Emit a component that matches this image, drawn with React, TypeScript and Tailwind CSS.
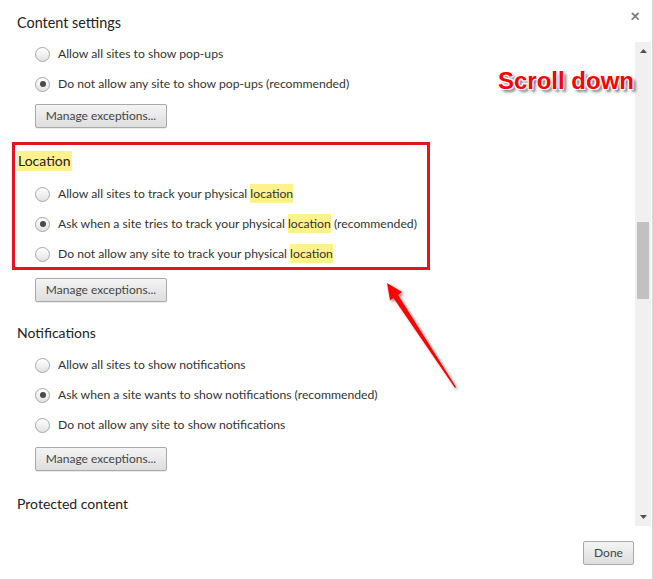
import type { ReactNode } from 'react'

const Radio = ({ checked, children }: { checked?: boolean; children: ReactNode }) => {
  return (
    <div className="flex h-[20px] items-center pl-[18px]">
      <span className="flex h-[15px] w-[15px] items-center justify-center rounded-full border border-[#a6a6a6] bg-linear-to-b from-white to-[#e2e2e2] shadow-[inset_0_1px_0_#fff]">
        {checked && <span className="h-[6px] w-[6px] rounded-full bg-[#4a4a4a]" />}
      </span>
      <span className="ml-[8px] whitespace-nowrap text-[12.2px] text-[#333]">{children}</span>
    </div>
  )
}

const Hl = ({ children }: { children: ReactNode }) => (
  <span className="bg-[#fff28c] py-[2px]">{children}</span>
)

const ManageButton = ({ className = '' }: { className?: string }) => (
  <button
    className={`ml-[18px] flex h-[24px] w-[132px] items-center justify-center rounded-[2px] border border-[#a9a9a9] bg-linear-to-b from-[#f4f4f4] to-[#dedede] text-[12px] text-[#444] shadow-[0_1px_0_rgba(0,0,0,0.08)] ${className}`}
  >
    Manage exceptions...
  </button>
)

const Heading = ({ children, className = '' }: { children: ReactNode; className?: string }) => (
  <div className={`flex h-[20px] items-center text-[14px] text-[#222] ${className}`}>{children}</div>
)

export default function App() {
  return (
    <div
      className="relative h-[579px] w-[653px] overflow-hidden border-r border-[#d6d6d6] bg-white"
      style={{ fontFamily: 'Lato, "Noto Sans", sans-serif' }}
    >
      <header className="flex h-[44px] items-start justify-between pl-[17px] pr-[12px] pt-[12px]">
        <h1 className="text-[14.4px] leading-[22px] text-[#222]">Content settings</h1>
        <span className="-mt-[1px] text-[17px] font-bold leading-[10px] text-[#777]">×</span>
      </header>

      <div className="-mt-[2px] flex h-[484px]">
        <div className="flex-1 overflow-hidden pl-[17px] pt-[2px]">
          <div className="flex flex-col gap-[10px]">
            <Radio>Allow all sites to show pop-ups</Radio>
            <Radio checked>Do not allow any site to show pop-ups (recommended)</Radio>
          </div>
          <ManageButton className="mt-[10px]" />

          <Heading className="mt-[23px]">
            <span className="bg-[#fff28c] px-[1px] leading-[20px]">Location</span>
          </Heading>
          <div className="mt-[13px] flex flex-col gap-[10px]">
            <Radio>
              Allow all sites to track your physical <Hl>location</Hl>
            </Radio>
            <Radio checked>
              Ask when a site tries to track your physical <Hl>location</Hl> (recommended)
            </Radio>
            <Radio>
              Do not allow any site to track your physical <Hl>location</Hl>
            </Radio>
          </div>
          <ManageButton className="mt-[14px]" />

          <Heading className="mt-[20px]">Notifications</Heading>
          <div className="mt-[13px] flex flex-col gap-[10px]">
            <Radio>Allow all sites to show notifications</Radio>
            <Radio checked>Ask when a site wants to show notifications (recommended)</Radio>
            <Radio>Do not allow any site to show notifications</Radio>
          </div>
          <ManageButton className="mt-[12px]" />

          <Heading className="mt-[22px]">Protected content</Heading>
        </div>

        <div className="mr-[1px] flex w-[16px] flex-col bg-[#f0f0f0]">
          <div className="flex h-[18px] items-center justify-center">
            <svg width="7" height="4" viewBox="0 0 7 4">
              <path d="M0 4 L3.5 0 L7 4 Z" fill="#505050" />
            </svg>
          </div>
          <div className="mx-[2px] mt-[162px] h-[77px] bg-[#c1c1c1]" />
          <div className="flex-1" />
          <div className="flex h-[18px] items-center justify-center">
            <svg width="7" height="4" viewBox="0 0 7 4">
              <path d="M0 0 L3.5 4 L7 0 Z" fill="#505050" />
            </svg>
          </div>
        </div>
      </div>

      <footer className="flex justify-end pr-[18px] pt-[15px]">
        <button className="h-[24px] w-[51px] rounded-[2px] border border-[#a9a9a9] bg-linear-to-b from-[#f4f4f4] to-[#dedede] text-[12px] text-[#444]">
          Done
        </button>
      </footer>

      {/* annotations */}
      <div className="absolute left-[12px] top-[142px] h-[128px] w-[418px] border-[3px] border-[#e8141c]" />
      <div
        className="absolute left-[498px] top-[66px] text-[24px] font-bold leading-[30px] text-[#ff0000] [text-shadow:1px_1px_0_#fff,-1px_-1px_0_#fff,1px_-1px_0_#fff,-1px_1px_0_#fff,3px_3px_3px_rgba(0,0,0,0.55)]"
        style={{ fontFamily: '"Liberation Sans", Arial, sans-serif' }}
      >
        Scroll down
      </div>
      <svg className="pointer-events-none absolute left-0 top-0" width="653" height="579">
        <defs>
          <filter id="sh" x="-50%" y="-50%" width="200%" height="200%">
            <feDropShadow dx="2" dy="2" stdDeviation="1.5" floodColor="#000" floodOpacity="0.45" />
          </filter>
        </defs>
        <polygon
          points="387,283 402,292 398,295 456,387 455,388 393.5,298 390,300.5"
          fill="#ff0000"
          filter="url(#sh)"
        />
      </svg>
    </div>
  )
}
